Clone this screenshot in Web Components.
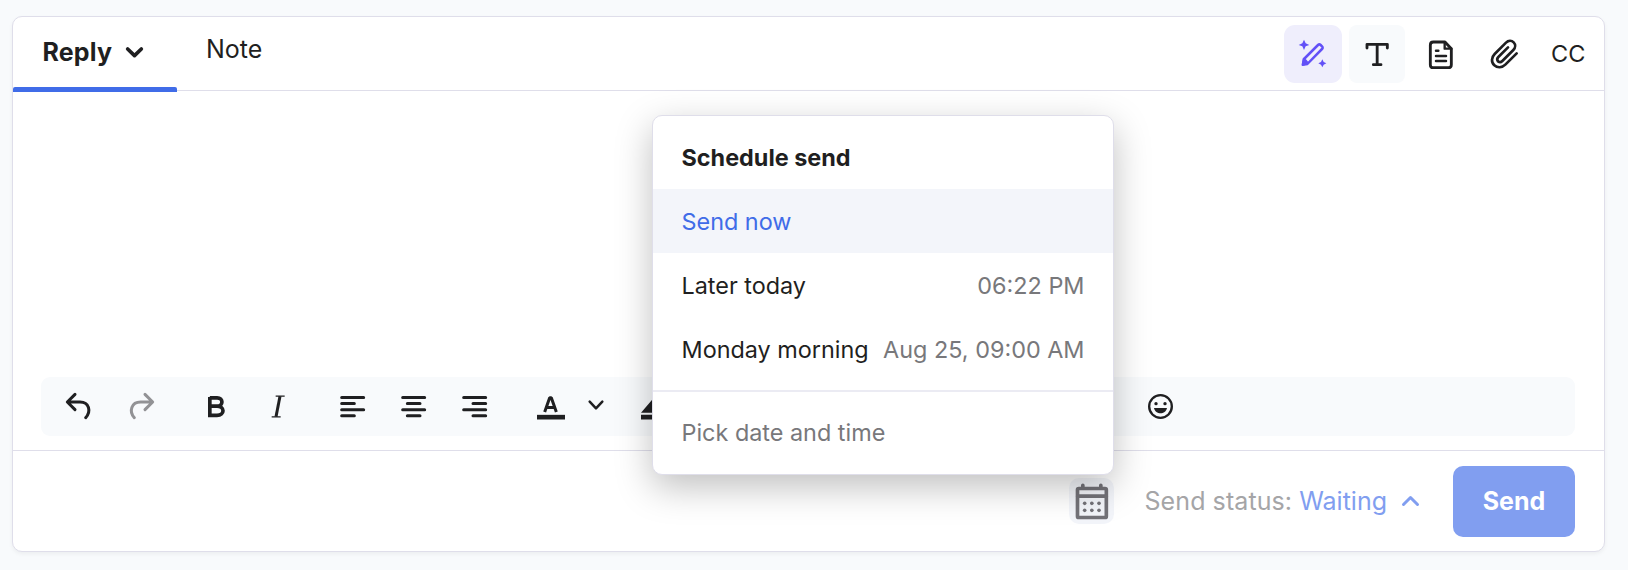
<!DOCTYPE html>
<html lang="en">
<head>
<meta charset="utf-8">
<title>Reply composer</title>
<style>
html,body{margin:0;height:100%}
body{background:#f8fafc;font-family:Inter,"Liberation Sans",sans-serif;color:#1f1f21;overflow:hidden}
</style>
</head>
<body>
<reply-composer></reply-composer>
<script>
const ICONS = {
  wand: ['42 45 174 174', `<g fill="none" stroke="#6250f7" stroke-width="7.500" stroke-linejoin="round" stroke-linecap="round"><path d="M99 163l3-16 42-42q4-4 8 0l4 4q4 4 0 8l-41 42z"/></g><path fill="#6250f7" d="M99 143q12 3 18 18l-4 5-15 2q-4 0-3-4zM102 89l5 11 11 5-11 4-5 11-5-11-11-4 11-5zM157 148l4 8 8 4-8 4-4 8-4-8-8-4 8-4z"/>`],
  text: ['237 45 168 174', `<path fill="none" stroke="#1f1f21" stroke-width="8.500" stroke-linecap="round" stroke-linejoin="round" d="M291 114v-11h61v11M321.500 103v61M310 164h23"/>`],
  doc: ['429 45 168 174', `<g fill="none" stroke="#1f1f21" stroke-width="8.500" stroke-linecap="round" stroke-linejoin="round"><path d="M490 96h35l19 20v48q0 9-9 9h-46q-8 0-8-9v-59q0-9 9-9z"/><path d="M524 97v19h20" stroke-width="7"/><path d="M498 122h7M498 138h30M498 153h30" stroke-width="7.500"/></g>`],
  clip: ['621 45 168 174', `<path fill="none" stroke="#1f1f21" stroke-width="8" stroke-linecap="round" d="M740 130l-34 34c-10 10-24 10-33 2-10-9-9-24 1-34l34-34c7-7 17-7 23-1s6 16-1 23l-33 33c-4 4-9 4-13 1-3-4-3-9 1-13l29-29"/>`],
  down: ['372 134 66 54', `<path fill="none" stroke="#1f1f21" stroke-width="11" stroke-linecap="round" stroke-linejoin="round" d="M383 149l20.500 20 20.500-20"/>`],
  undo: ['54 21 180 177', `<path fill="none" stroke="#1f1f21" stroke-width="9" stroke-linecap="round" stroke-linejoin="round" d="M135 73l-23 23 23 23M113 96h37c28 0 34 28 17 47"/>`],
  redo: ['246 21 180 177', `<path fill="none" stroke="#929295" stroke-width="9" stroke-linecap="round" stroke-linejoin="round" d="M345 73l23 23-23 23M367 96h-35c-28 0-36 28-19 47"/>`],
  bold: ['468 21 180 177', `<path fill="none" stroke="#1f1f21" stroke-width="11" stroke-linejoin="miter" d="M539.500 83.500h22c19 0 19 25 0 25h-22M561 108.500c24 0 24 27.500 0 27.500h-21.500v-55"/>`],
  italic: ['654 21 180 177', `<path fill="none" stroke="#1f1f21" d="M750 79l-12 61" stroke-width="9"/><path fill="none" stroke="#1f1f21" stroke-width="4" d="M737 78.500h27M725 140.500h27"/>`],
  left: ['9 21 180 177', `<path stroke="#1f1f21" stroke-width="9" stroke-linecap="round" d="M65 82.500h66M65 100.500h38M65 119h66M65 137.500h38"/>`],
  center: ['192 21 180 177', `<path stroke="#1f1f21" stroke-width="9" stroke-linecap="round" d="M248 82.500h66M262 100.500h38M248 119h66M262 137.500h38"/>`],
  right: ['375 21 180 177', `<path stroke="#1f1f21" stroke-width="9" stroke-linecap="round" d="M431 82.500h66M459 100.500h38M431 119h66M459 137.500h38"/>`],
  color: ['603 21 180 177', `<path fill="none" stroke="#1f1f21" stroke-width="9" stroke-linejoin="bevel" d="M674 126l15-43h5l15 43M679 112.500h25"/><path fill="#1f1f21" d="M651 134.500h84v14h-84z"/>`],
  caret: ['783 21 90 177', `<path fill="none" stroke="#1f1f21" stroke-width="7.500" stroke-linecap="round" stroke-linejoin="round" d="M809 95l19 20 19-20"/>`],
  marker: ['900 21 180 177', `<path fill="#1f1f21" d="M963 128l36-42 30 30-12 12zM963 134.500h83v14h-83z"/>`],
  emoji: ['240 21 180 177', `<circle cx="331.500" cy="109.500" r="34" fill="none" stroke="#1f1f21" stroke-width="7"/><g fill="#1f1f21"><circle cx="318" cy="101" r="5"/><circle cx="345" cy="101" r="5"/><path d="M312 114h39c-4 21-35 21-39 0z"/></g>`],
  calendar: ['57 324 135 138', `<g fill="none" stroke="#737278" stroke-width="11" stroke-linecap="round"><rect x="82.500" y="355.500" width="86.500" height="87" rx="4"/><path d="M83 378.500h86M98.500 346v8M152.500 346v8"/></g><g fill="#737278"><circle cx="104" cy="400" r="5.500"/><circle cx="125.500" cy="400" r="5.500"/><circle cx="147" cy="400" r="5.500"/><circle cx="104" cy="421" r="5.500"/><circle cx="125.500" cy="421" r="5.500"/><circle cx="147" cy="421" r="5.500"/></g>`],
  up: ['180 192 63 48', `<path fill="none" stroke="#819ef0" stroke-width="9" stroke-linecap="round" stroke-linejoin="round" d="M190.500 226.500l21-21 21 21"/>`]
};
function define(name, html, setup) {
  const t = document.createElement('template');
  t.innerHTML = html;
  customElements.define(name, class extends HTMLElement {
    constructor() {
      super();
      this.attachShadow({ mode: 'open' }).append(t.content.cloneNode(true));
    }
    connectedCallback() { if (setup) setup(this); }
  });
}
define('ui-icon', `<style>:host{display:block;flex:none}svg{display:block}</style><svg aria-hidden="true"></svg>`, el => {
  const [box, body] = ICONS[el.getAttribute('name')];
  const [, , w, h] = box.split(' ').map(Number);
  const svg = el.shadowRoot.querySelector('svg');
  svg.setAttribute('viewBox', box);
  svg.setAttribute('width', w / 3);
  svg.setAttribute('height', h / 3);
  svg.innerHTML = body;
});
define('composer-tab', `<style>
:host{display:flex;box-sizing:border-box;height:75px;font-size:25px;line-height:30px;padding:17px 0 0 29px}
:host([active]){width:164px;font-weight:700;letter-spacing:.15px;padding:20px 0 0 29.5px;gap:12px;position:relative}
:host([active])::after{content:"";position:absolute;left:0;right:0;bottom:0;height:5px;background:#406ce8;border-radius:2px 2px 0 0}
</style><slot></slot>`);
define('composer-header', `<style>
:host{display:flex;height:73px;border-bottom:1px solid #dfdeea}
.tools{margin-left:auto;display:flex;padding-top:8px;height:58px}
ui-icon{border-radius:8px}
.ai{background:#efeefc;border-radius:11px;margin-right:7px}
.fmt{background:#f8fafc;margin-right:8px}
.doc{margin-right:8px}
.cc{font-size:23.5px;line-height:58px;width:53px;padding-left:18px}
</style>
<composer-tab active><span>Reply</span><ui-icon name="down" style="margin-top:7px"></ui-icon></composer-tab>
<composer-tab>Note</composer-tab>
<div class="tools"><ui-icon class="ai" name="wand"></ui-icon><ui-icon class="fmt" name="text"></ui-icon><ui-icon class="doc" name="doc"></ui-icon><ui-icon name="clip"></ui-icon><span class="cc">CC</span></div>`);
define('format-bar', `<style>
:host{display:flex;margin:0 29px 14px 28px;height:59px;background:#f8fafc;border-radius:9px;padding-left:7px}
.g4{margin-right:4px}.g14{margin-right:14px}.g2{margin-right:2px}.g15{margin-right:15px}.g1{margin-right:1px}.g16{margin-right:16px}.g9{margin-right:9px}.g450{margin-right:450px}
</style>
<ui-icon class="g4" name="undo"></ui-icon><ui-icon class="g14" name="redo"></ui-icon>
<ui-icon class="g2" name="bold"></ui-icon><ui-icon class="g15" name="italic"></ui-icon>
<ui-icon class="g1" name="left"></ui-icon><ui-icon class="g1" name="center"></ui-icon><ui-icon class="g16" name="right"></ui-icon>
<ui-icon name="color"></ui-icon><ui-icon class="g9" name="caret"></ui-icon><ui-icon class="g450" name="marker"></ui-icon>
<ui-icon name="emoji"></ui-icon>`);
define('send-footer', `<style>
:host{display:flex;box-sizing:border-box;height:101px;border-top:1px solid #dfdeea;padding:15px 29px 0 0;justify-content:flex-end;font-size:25px;line-height:71px}
.cal{background:#f3f5fa;border-radius:10px;height:46px;margin:12px 31px 0 0}
.status{color:#a5a5a7;white-space:pre;letter-spacing:.08px}.status b{font-weight:400;color:#819ef0;letter-spacing:0}
.up{margin:27px 32px 0 13px}
button{all:unset;box-sizing:border-box;width:122px;height:71px;border-radius:10px;background:#819ef0;color:#fff;font-weight:700;text-align:center}
</style>
<ui-icon class="cal" name="calendar"></ui-icon><span class="status">Send status: <b>Waiting</b></span><ui-icon class="up" name="up"></ui-icon><button>Send</button>`);
define('menu-row', `<style>
:host{display:flex;justify-content:space-between;box-sizing:border-box;height:64px;line-height:64px;padding:1px 28.5px 0;white-space:nowrap}
:host([heading]){font-weight:700}
:host([selected]){background:#f3f5fa;color:#406ce8}
:host([muted]),::slotted(time){color:#78787b}
:host([muted]){padding-top:0}
</style><slot></slot>`);
define('schedule-menu', `<style>
:host{display:block;box-sizing:border-box;width:462px;height:360px;background:#fff;border:1px solid #dfdeea;border-radius:10px;padding:9px 0;font-size:23.400px;box-shadow:0 12px 36px rgba(0,0,0,.25)}
hr{border:0;height:2px;background:#ebebf3;margin:9px 0}
</style>
<menu-row heading><span>Schedule send</span></menu-row>
<menu-row selected><span>Send now</span></menu-row>
<menu-row><span>Later today</span><time>06:22 PM</time></menu-row>
<menu-row><span>Monday morning</span><time>Aug 25, 09:00 AM</time></menu-row>
<hr>
<menu-row muted><span>Pick date and time</span></menu-row>`);
define('reply-composer', `<style>
:host{display:block;padding:16px 0 0 12px}
.card{position:relative;box-sizing:border-box;width:1593px;height:536px;display:flex;flex-direction:column;background:#fff;border:1px solid #dfdeea;border-radius:10px;box-shadow:0 2px 4px rgba(0,0,0,.05)}
.body{flex:1}
schedule-menu{position:absolute;left:639px;top:98px}
</style>
<section class="card">
<composer-header></composer-header><div class="body"></div><format-bar></format-bar><send-footer></send-footer>
<schedule-menu></schedule-menu>
</section>`);
</script>
</body>
</html>
